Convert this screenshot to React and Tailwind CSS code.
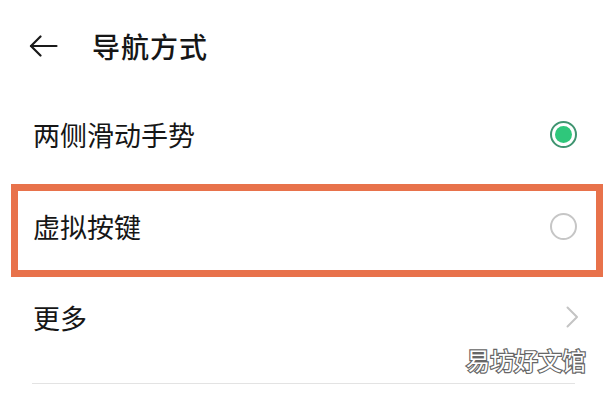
import React from "react";

export default function App() {
  const font = { fontFamily: '"Noto Sans CJK SC", "Noto Sans", sans-serif' };
  return (
    <div className="relative w-[613px] h-[395px] bg-white overflow-hidden text-[#161616]" style={font}>
      <div className="flex items-center h-[92px]">
        <svg className="ml-[29px]" width="29" height="22" viewBox="0 0 29 22" fill="none" stroke="#1a1a1a" strokeWidth="2.2" strokeLinecap="round" strokeLinejoin="round">
          <path d="M27.5 11H2" />
          <path d="M11.5 1.5L2 11l9.5 9.5" />
        </svg>
        <div className="ml-[34px] text-[28px] font-medium leading-none tracking-[1px]">导航方式</div>
      </div>
      <div className="flex items-center justify-between h-[84px] pl-[33px] pr-[36px]">
        <div className="text-[27px] leading-none">两侧滑动手势</div>
        <div className="w-[27px] h-[27px] rounded-full border-[2.5px] border-[#3f9470] flex items-center justify-center">
          <div className="w-[17px] h-[17px] rounded-full bg-[#2fc77b]" />
        </div>
      </div>
      <div className="mt-[8px] ml-[11px] w-[592px] h-[93px] border-[7px] border-[#e8724b] flex items-center justify-between pl-[15px] pr-[19px] pb-[8px]">
        <div className="text-[27px] leading-none">虚拟按键</div>
        <div className="w-[27px] h-[27px] rounded-full border-[2px] border-[#c6c6c6]" />
      </div>
      <div className="flex items-center justify-between h-[80px] pl-[33px] pr-[34px]">
        <div className="text-[27px] leading-none">更多</div>
        <svg width="13" height="22" viewBox="0 0 13 22" fill="none" stroke="#c4c4c4" strokeWidth="2" strokeLinecap="round" strokeLinejoin="round">
          <path d="M1.5 1.5L11 11l-9.5 9.5" />
        </svg>
      </div>
      <div className="mt-[26px] ml-[32px] w-[543px] h-px bg-[#e3e3e3]" />
      <div className="absolute left-[466px] top-[348px] text-[24px] leading-none text-white [-webkit-text-stroke:2.4px_#666666] [paint-order:stroke_fill] tracking-[0px]">易坊好文馆</div>
    </div>
  );
}
